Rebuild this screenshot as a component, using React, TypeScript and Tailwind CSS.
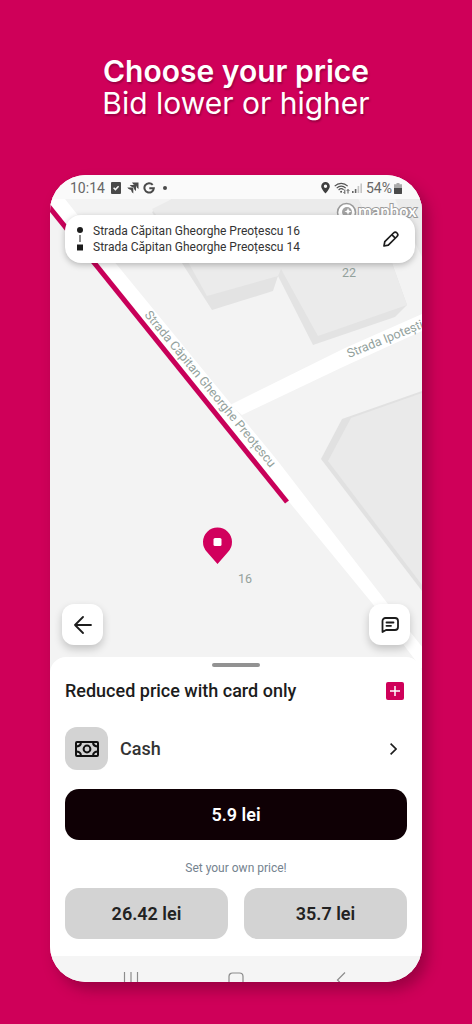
import { useState } from "react";

const ROUTE = ["Strada Căpitan Gheorghe Preoțescu 16", "Strada Căpitan Gheorghe Preoțescu 14"];
const OFFERS = ["26.42 lei", "35.7 lei"];

function StatusBar() {
  return (
    <div className="flex h-6 items-center justify-between bg-[#fafafa] pl-5 pr-5 pt-0.5 text-sm leading-5 text-[#666]">
      <div className="flex items-center">
        <span>10:14</span>
        <svg className="ml-1.5 h-3 w-[10px]" viewBox="0 0 10 12">
          <rect width="10" height="12" rx="1" fill="#4a4a4a" />
          <path d="M2.6 5.8 4.4 7.6 7.6 4.2" fill="none" stroke="#fafafa" strokeWidth="1.5" />
        </svg>
        <svg className="ml-1.5 h-3 w-3" viewBox="0 0 12 12" fill="#4a4a4a">
          <path d="M5 .5h6.500V7L9.800 5.600 9 3.500 6.400 2.600z" />
          <path d="M2.700 3H9v6L7.500 7.800 6.600 5.400 4.100 4.500z" />
          <path d="M.3 5.400h6v6L4.900 10.200 4 7.900 1.600 6.900z" />
        </svg>
        <svg className="ml-1 h-3 w-3" viewBox="0 0 12 12">
          <path d="M9.7 2.8A4.7 4.7 0 1 0 10.8 6.3H6.3" fill="none" stroke="#4a4a4a" strokeWidth="2" />
        </svg>
        <span className="ml-2 size-1 rounded-full bg-[#4a4a4a]" />
      </div>
      <div className="flex items-center">
        <svg className="h-3 w-[9px]" viewBox="0 0 9 12">
          <path
            d="M4.5 0A4.3 4.3 0 0 0 .2 4.3C.2 7.2 4.5 11.6 4.5 11.6S8.8 7.2 8.8 4.3A4.3 4.3 0 0 0 4.5 0Zm0 6a1.7 1.7 0 1 1 0-3.4 1.7 1.7 0 0 1 0 3.4Z"
            fill="#3f3f3f"
          />
        </svg>
        <svg className="ml-1 h-3 w-4" viewBox="0 0 16 12" fill="none" stroke="#555" strokeWidth="1.2">
          <path d="M.7 4.2C4.4.4 10 .4 13.7 4.2" />
          <path d="M2.7 6.1C5.3 3.5 9.1 3.5 11.7 6.1" />
          <path d="M4.6 8C6.2 6.5 8.2 6.5 9.6 7.8" />
          <circle cx="7.1" cy="9.7" r="1" fill="#555" stroke="none" />
          <path d="M10.8 7.5v4M9.5 10.2l1.3 1.3M14 11.5v-4M12.8 8.8 14 7.5l1.3 1.3" strokeWidth="1" />
        </svg>
        <svg className="ml-0.5 h-2.5 w-[10px]" viewBox="0 0 10 10">
          <path d="M0 10V8h1.6v2zM2.8 10V6h1.6v4z" fill="#666" />
          <path d="M5.6 10V3h1.6v7zM8.4 10V.5H10V10z" fill="#c4c4c4" />
        </svg>
        <span className="ml-1">54%</span>
        <svg className="ml-0.5 h-[11px] w-2" viewBox="0 0 8 11">
          <path d="M2.5 0h3v1.2H8V11H0V1.2h2.5z" fill="#aaa" />
          <path d="M0 5h8v5.2q0 .8-.8.8H.8q-.8 0-.8-.8z" fill="#4a4a4a" />
        </svg>
      </div>
    </div>
  );
}

function StreetMap() {
  return (
    <svg
      className="absolute inset-0 h-full w-full"
      viewBox="0 0 372 478"
      preserveAspectRatio="xMidYMin slice"
      aria-hidden="true"
    >
      <rect width="372" height="478" fill="#f3f3f3" />

      {/* Buildings: side walls first, roofs on top */}
      <path d="M102 13 122 0H308L318 20 342 64 357 106 345 118 263 146 228 77 223 92 162 111 130 61Z" fill="#e3e3e3" />
      <path d="M102 10 122 0H308L318 20 342 64 357 106 268 137 231 70 228 77 157 97 137 61Z" fill="#ebebeb" />
      <path d="M345 0H372V58L362 38Z" fill="#ebebeb" />
      <path d="M372 192 292 220 271 260 372 392Z" fill="#e1e1e1" />
      <path d="M372 194 301 219 278 262 372 386Z" fill="#eaeaea" />

      {/* Streets */}
      <path d="M180 206 295 149 372 115V132L295 167 255 186 192 216Z" fill="#fff" />
      <path d="M-6 0H15L63 61 227 261 338 405 396 478H378L322 404 240 304 44 61Z" fill="#fff" />

      <path d="M-4 4 237 303" stroke="#c80059" strokeWidth="5" fill="none" />

      <g fill="#93a19c" fontSize="12.5">
        <text transform="translate(94 116) rotate(50.5)">Strada Căpitan Gheorghe Preoțescu</text>
        <text transform="translate(299 159) rotate(-22)">Strada Ipotești</text>
        <text x="292" y="78">22</text>
        <text x="188" y="384">16</text>
      </g>

      <g transform="translate(167.5 343)">
        <path d="M0 22 -10.5 10A14.5 14.5 0 1 1 10.5 10Z" fill="#d1005d" />
        <rect x="-4" y="-4" width="8" height="8" rx="1.5" fill="#fff" />
      </g>

      <g>
        <circle cx="296.5" cy="13.5" r="9" fill="#fff" stroke="#9b9b9b" strokeWidth="1.5" />
        <circle cx="297" cy="13" r="5" fill="#a3a3a3" />
        <path d="m298 9 1 2.5 2.5 1-2.5 1L298 16l-1-2.5-2.5-1 2.5-1z" fill="#fff" />
        <text
          x="308"
          y="18"
          fontSize="16.5"
          className="font-['Lato',sans-serif] font-bold"
          fill="#fff"
          stroke="#9b9b9b"
          strokeWidth="2"
          paintOrder="stroke"
        >
          mapbox
        </text>
      </g>
    </svg>
  );
}

function RouteCard() {
  return (
    <div className="ml-[15px] mr-[7px] mt-4 flex items-center rounded-2xl bg-white py-2 pl-3 pr-4 shadow-[0_2px_6px_rgba(0,0,0,0.25)]">
      <svg className="h-6 w-1.5 shrink-0" viewBox="0 0 6 24" fill="#1c1c1c">
        <circle cx="3" cy="3" r="3" />
        <path d="M2.5 8h1v7h-1zM0 17.5h6v6H0z" />
      </svg>
      <ul className="ml-2.5 min-w-0 flex-1 text-xs leading-4 text-[#333]">
        {ROUTE.map((stop) => (
          <li key={stop}>{stop}</li>
        ))}
      </ul>
      <button type="button" aria-label="Edit route">
        <svg className="size-4" viewBox="0 0 16 16" fill="none" stroke="#1c1c1c" strokeWidth="1.7" strokeLinejoin="round">
          <path d="M1 15 1.8 10.7 10.5 2A2.5 2.5 0 0 1 14 2a2.5 2.5 0 0 1 0 3.5L5.3 14.2Z" />
          <path d="M8.8 3.7 12.3 7.2" />
        </svg>
      </button>
    </div>
  );
}

const roundButton =
  "flex size-[41px] items-center justify-center rounded-xl bg-white shadow-[0_4px_8px_rgba(0,0,0,0.2)]";

export default function App() {
  const [offer, setOffer] = useState<string | null>(null);

  return (
    <div className="flex min-h-screen flex-col bg-[#cf0059] px-[50px] pb-[42px] font-['Roboto',sans-serif]">
      <h1 className="pb-14 pt-[55px] text-center font-['Inter',sans-serif] text-3xl leading-8 text-white [text-shadow:1px_2px_2px_rgba(0,0,0,0.25)]">
        <span className="block font-semibold">Choose your price</span>
        <span className="block font-normal">Bid lower or higher</span>
      </h1>

      <main className="flex flex-1 flex-col overflow-hidden rounded-[36px] bg-white shadow-[6px_8px_14px_rgba(80,0,35,0.4)]">
        <StatusBar />

        <section className="relative flex flex-1 flex-col justify-between">
          <StreetMap />
          <div className="relative">
            <RouteCard />
          </div>
          <div className="relative flex justify-between px-3 pb-8">
            <button type="button" aria-label="Back" className={roundButton}>
              <svg className="size-[18px]" viewBox="0 0 18 18" fill="none" stroke="#1c1c1c" strokeWidth="1.8" strokeLinecap="round" strokeLinejoin="round">
                <path d="M17 9H1M9 1 1 9l8 8" />
              </svg>
            </button>
            <button type="button" aria-label="Chat" className={roundButton}>
              <svg className="h-4 w-[18px]" viewBox="0 0 18 16" fill="none" stroke="#1c1c1c" strokeWidth="1.8" strokeLinecap="round" strokeLinejoin="round">
                <path d="M1.5 15V4a3 3 0 0 1 3-3H14a3 3 0 0 1 3 3v6a3 3 0 0 1-3 3H5z" />
                <path d="M5.5 5.5h7M5.5 8.8h4.5" />
              </svg>
            </button>
          </div>
        </section>

        <section className="relative -mt-5 rounded-t-2xl bg-white px-[15px] pb-[17px] pt-1.5">
          <div className="mx-auto h-1 w-12 rounded-full bg-[#929292]" />
          <div className="mt-3 flex items-center justify-between pr-[3px]">
            <h2 className="text-lg font-medium leading-6 text-[#1c1c1c]">Reduced price with card only</h2>
            <button
              type="button"
              aria-label="Add card"
              className="flex size-[18px] items-center justify-center rounded-xs bg-[#cf0059]"
            >
              <svg className="size-2.5" viewBox="0 0 10 10" stroke="#fff" strokeWidth="1.5">
                <path d="M5 0v10M0 5h10" />
              </svg>
            </button>
          </div>

          <button type="button" className="mt-6 flex w-full items-center pr-2.5 text-left">
            <span className="flex size-[43px] items-center justify-center rounded-xl bg-[#d3d3d3]">
              <svg className="h-4 w-6" viewBox="0 0 24 16" fill="none" stroke="#111" strokeWidth="2">
                <rect x="1" y="1" width="22" height="14" rx="1" />
                <circle cx="12" cy="8" r="3.4" />
                <path d="M2 5.5Q5.5 5 6 2M22 5.5Q18.5 5 18 2M2 10.5Q5.5 11 6 14M22 10.5Q18.5 11 18 14" />
              </svg>
            </span>
            <span className="ml-3 flex-1 text-lg font-medium text-[#333]">Cash</span>
            <svg className="h-3 w-[7px]" viewBox="0 0 7 12" fill="none" stroke="#1c1c1c" strokeWidth="1.6">
              <path d="m.6.6 5.4 5.4L.6 11.4" />
            </svg>
          </button>

          <button
            type="button"
            className="mt-[19px] h-[51px] w-full rounded-[14px] bg-[#0f0005] text-lg font-semibold text-white"
          >
            {offer ?? "5.9 lei"}
          </button>

          <p className="mt-5 text-center text-xs leading-4 text-[#75838f]">Set your own price!</p>
          <div className="mt-3 grid grid-cols-2 gap-4">
            {OFFERS.map((price) => (
              <button
                key={price}
                type="button"
                onClick={() => setOffer(price)}
                className="h-[51px] rounded-[14px] bg-[#d3d3d3] text-lg font-semibold text-[#222]"
              >
                {price}
              </button>
            ))}
          </div>
        </section>

        {/* Android navigation, cut off by the bottom of the frame */}
        <div className="flex h-[26px] items-start justify-around overflow-hidden bg-[#f5f5f5] px-7 pt-4">
          <svg className="h-4 w-4 shrink-0" viewBox="0 0 16 16" stroke="#8c8c8c" strokeWidth="1.2">
            <path d="M1.5 0v16M8 0v16M14.5 0v16" />
          </svg>
          <svg className="h-4 w-4 shrink-0" viewBox="0 0 16 16" fill="none" stroke="#8c8c8c" strokeWidth="1.2">
            <rect x="1" y="1" width="14" height="14" rx="3.5" />
          </svg>
          <svg className="h-4 w-4 shrink-0" viewBox="0 0 16 16" fill="none" stroke="#8c8c8c" strokeWidth="1.2">
            <path d="M12 .5 4.5 8 12 15.5" />
          </svg>
        </div>
      </main>
    </div>
  );
}
